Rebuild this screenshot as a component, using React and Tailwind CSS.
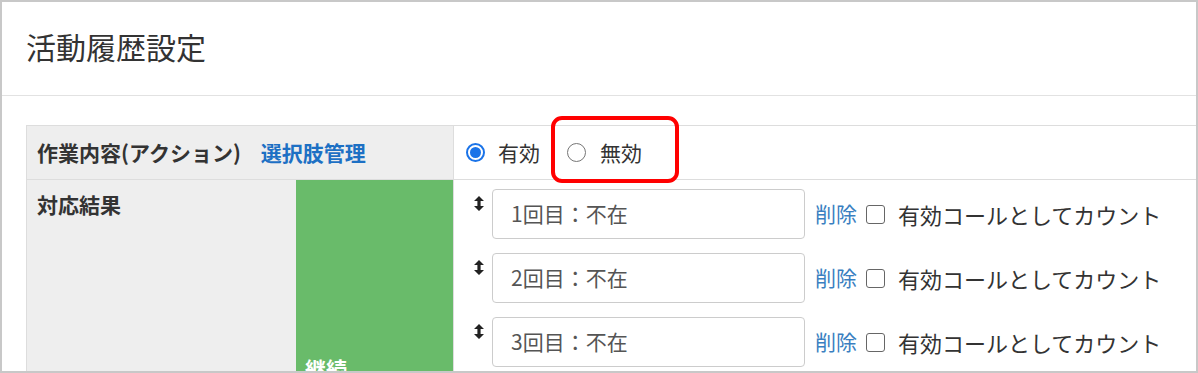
const ROWS = ['1回目：不在', '2回目：不在', '3回目：不在'];

function Radio({ checked }) {
  return checked ? (
    <span className="flex h-[19px] w-[19px] shrink-0 items-center justify-center rounded-full border-2 border-[#1a73e8]">
      <span className="h-[11px] w-[11px] rounded-full bg-[#1a73e8]" />
    </span>
  ) : (
    <span className="block h-[19px] w-[19px] shrink-0 rounded-full border-[1.5px] border-[#767676]" />
  );
}

function SortHandle() {
  return (
    <svg width="10" height="15" viewBox="0 0 10 15" className="mt-[7px] shrink-0">
      <path d="M5 0 L10 5 H6.6 V10 H10 L5 15 L0 10 H3.4 V5 H0 Z" fill="#222" />
    </svg>
  );
}

function ResultRow({ label }) {
  return (
    <div className="flex items-start">
      <SortHandle />
      <div className="ml-[8px] flex h-[50px] w-[313px] shrink-0 items-center rounded-[4px] border border-[#cccccc] px-[18px] text-[21px] text-[#555]">
        {label}
      </div>
      <div className="ml-[10px] flex h-[50px] items-center">
        <a className="text-[21px] text-[#3a7fc1]">削除</a>
        <span className="ml-[9px] h-[19px] w-[19px] rounded-[3px] border-[1.5px] border-[#666]" />
        <span className="ml-[13px] whitespace-nowrap text-[22px] text-[#333]">有効コールとしてカウント</span>
      </div>
    </div>
  );
}

export default function App() {
  return (
    <div
      className="relative h-[373px] w-[1198px] overflow-hidden border-2 border-[#c8c8c8] bg-white"
      style={{ fontFamily: '"Noto Sans CJK JP", "Noto Sans", sans-serif' }}
    >
      <div className="flex h-[94px] items-center border-b border-[#e2e2e2] px-[24px]">
        <h1 className="-mt-[4px] text-[30px] font-normal text-[#333]">活動履歴設定</h1>
      </div>

      <div className="pl-[24px] pt-[29px]">
        <div className="border-l border-t border-[#dddddd]">
          <div className="flex h-[54px] border-b border-[#dddddd]">
            <div className="flex w-[427px] shrink-0 items-center border-r border-[#dddddd] bg-[#eeeeee] px-[10px] text-[21px] font-bold">
              <span className="text-[#333]">作業内容(アクション)</span>
              <a className="ml-[20px] text-[#1d70c4]">選択肢管理</a>
            </div>
            <div className="flex items-center pl-[12px] text-[21px] text-[#333]">
              <Radio checked />
              <span className="ml-[13px]">有効</span>
              <span className="ml-[27px] flex">
                <Radio />
              </span>
              <span className="ml-[14px]">無効</span>
            </div>
          </div>

          <div className="flex h-[200px]">
            <div className="w-[269px] shrink-0 bg-[#eeeeee] px-[10px] pt-[9px] text-[21px] font-bold text-[#333]">
              対応結果
            </div>
            <div className="flex w-[158px] shrink-0 items-end border-r border-[#dddddd] bg-[#69bb6a] px-[9px]">
              <span className="translate-y-[4px] text-[21px] font-bold text-white">継続</span>
            </div>
            <div className="flex flex-col gap-[14px] pl-[20px] pt-[9px]">
              {ROWS.map((r) => (
                <ResultRow key={r} label={r} />
              ))}
            </div>
          </div>
        </div>
      </div>

      <div className="absolute left-[549px] top-[114px] h-[67px] w-[128px] rounded-[11px] border-4 border-[#ff0000]" />
    </div>
  );
}
